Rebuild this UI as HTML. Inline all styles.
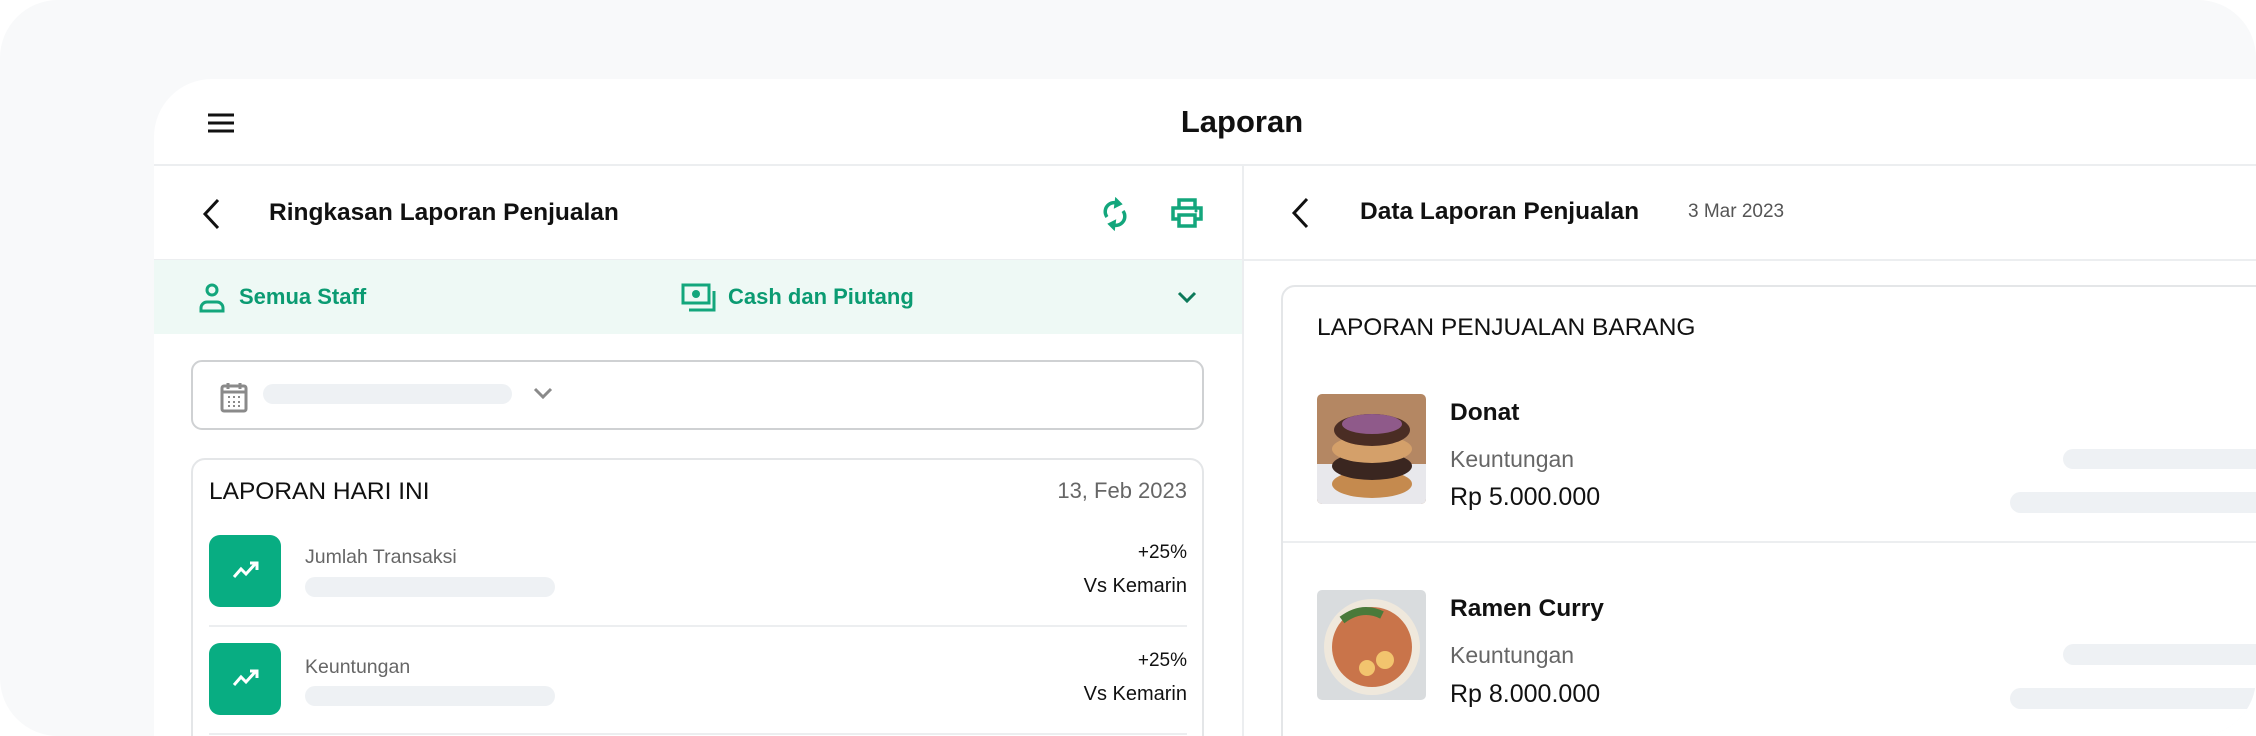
<!DOCTYPE html>
<html><head><meta charset="utf-8"><style>
*{margin:0;padding:0;box-sizing:border-box}
html,body{width:2256px;height:736px;overflow:hidden}
body{background:#fff;font-family:"Liberation Sans",sans-serif}
#o{position:absolute;left:0;top:0;width:2256px;height:736px;background:#f8f9fa;border-radius:58px;overflow:hidden}
#p{position:absolute;left:154px;top:79px;width:2102px;height:657px;background:#fff;border-radius:58px 0 0 0;overflow:hidden}
.a{position:absolute;white-space:nowrap}
.hl{position:absolute;height:2px;background:#eceef0}
.bar{position:absolute;background:#eef1f4;border-radius:12px}
.g{color:#0b9b72}
</style></head><body>
<div id="o">
<div id="p">
 <svg class="a" style="left:52px;top:32px" width="30" height="24" viewBox="0 0 30 24"><path d="M2 4h26M2 12h26M2 20h26" stroke="#111" stroke-width="3"/></svg>
 <div class="a" style="left:1088px;top:22px;width:0"><div style="position:absolute;transform:translateX(-50%);font-size:31px;font-weight:bold;color:#111;top:3px">Laporan</div></div>
 <div class="hl" style="left:0;top:85px;width:2102px"></div>
 <div class="a" style="left:1088px;top:86px;width:2px;height:571px;background:#eceef0"></div>
 <svg class="a" style="left:46px;top:118px" width="24" height="34" viewBox="0 0 24 34"><path d="M18 3L5 17l13 14" stroke="#111" stroke-width="3" fill="none"/></svg>
 <div class="a" style="left:115px;top:120px;font-size:24.5px;font-weight:bold;color:#111">Ringkasan Laporan Penjualan</div>
 <svg class="a" style="left:946px;top:118px" width="30" height="34" viewBox="0 0 30 34"><path d="M7 20a9 9 0 0 1 12-13M23 14a9 9 0 0 1-12 13" stroke="#13a67c" stroke-width="3.5" fill="none"/><path d="M16 2l5 5-6 3z M14 32l-5-5 6-3z" fill="#13a67c" stroke="#13a67c" stroke-width="2"/></svg>
 <svg class="a" style="left:1016px;top:118px" width="34" height="32" viewBox="0 0 34 32"><path d="M9 10V3h16v7M9 22H3V11h28v11h-6M9 18h16v11H9z" stroke="#13a67c" stroke-width="3.5" fill="none"/><circle cx="26" cy="14" r="1.5" fill="#13a67c"/></svg>
 <div class="hl" style="left:0;top:180px;width:1088px"></div>
 <div class="a" style="left:0;top:181px;width:1088px;height:74px;background:#eef9f5"></div>
 <svg class="a" style="left:44px;top:203px" width="28" height="32" viewBox="0 0 28 32"><circle cx="14" cy="8" r="5" stroke="#13a67c" stroke-width="3" fill="none"/><path d="M3 29v-3a6 6 0 0 1 6-6h10a6 6 0 0 1 6 6v3z" stroke="#13a67c" stroke-width="3" fill="none"/></svg>
 <div class="a g" style="left:85px;top:205px;font-size:22px;font-weight:bold">Semua Staff</div>
 <svg class="a" style="left:527px;top:204px" width="36" height="30" viewBox="0 0 36 30"><rect x="2" y="2" width="26" height="18" stroke="#13a67c" stroke-width="3" fill="none"/><circle cx="15" cy="11" r="4" fill="#13a67c"/><path d="M33 8v19H8" stroke="#13a67c" stroke-width="3" fill="none"/></svg>
 <div class="a g" style="left:574px;top:205px;font-size:22px;font-weight:bold">Cash dan Piutang</div>
 <svg class="a" style="left:1022px;top:210px" width="22" height="16" viewBox="0 0 22 16"><path d="M3 4l8 8 8-8" stroke="#0c7a5a" stroke-width="3" fill="none"/></svg>
 <div class="a" style="left:37px;top:281px;width:1013px;height:70px;border:2px solid #cfd1d3;border-radius:11px"></div>
 <svg class="a" style="left:66px;top:302px" width="28" height="32" viewBox="0 0 28 32"><rect x="2" y="5" width="24" height="25" rx="2" stroke="#8a8a8a" stroke-width="3" fill="none"/><path d="M2 11h24M8 2v6M20 2v6" stroke="#8a8a8a" stroke-width="3"/><path d="M8 16h2M13 16h2M18 16h2M8 21h2M13 21h2M18 21h2M8 25h2M13 25h2M18 25h2" stroke="#8a8a8a" stroke-width="2"/></svg>
 <div class="bar" style="left:109px;top:305px;width:249px;height:20px"></div>
 <svg class="a" style="left:378px;top:307px" width="22" height="14" viewBox="0 0 22 14"><path d="M3 3l8 8 8-8" stroke="#8a8a8a" stroke-width="3" fill="none"/></svg>
 <div class="a" style="left:37px;top:379px;width:1013px;height:300px;border:2px solid #e4e6e8;border-radius:14px"></div>
 <div class="a" style="left:55px;top:399px;font-size:24.5px;color:#111">LAPORAN HARI INI</div>
 <div class="a" style="left:1033px;top:399px;font-size:22px;color:#666;transform:translateX(-100%)">13, Feb 2023</div>
 <div class="a" style="left:55px;top:456px;width:72px;height:72px;background:#08ad82;border-radius:11px"></div>
 <svg class="a" style="left:78px;top:480px" width="28" height="22" viewBox="0 0 28 22"><path d="M2 18l7-8 5 5 10-11M18 4h7v7" stroke="#fff" stroke-width="3" fill="none"/></svg>
 <div class="a" style="left:151px;top:467px;font-size:19.5px;color:#666">Jumlah Transaksi</div>
 <div class="bar" style="left:151px;top:498px;width:250px;height:20px"></div>
 <div class="a" style="left:1033px;top:463px;font-size:19px;color:#111;transform:translateX(-100%)">+25%</div>
 <div class="a" style="left:1033px;top:496px;font-size:20px;color:#111;transform:translateX(-100%)">Vs Kemarin</div>
 <div class="hl" style="left:55px;top:546px;width:978px"></div>
 <div class="a" style="left:55px;top:564px;width:72px;height:72px;background:#08ad82;border-radius:11px"></div>
 <svg class="a" style="left:78px;top:588px" width="28" height="22" viewBox="0 0 28 22"><path d="M2 18l7-8 5 5 10-11M18 4h7v7" stroke="#fff" stroke-width="3" fill="none"/></svg>
 <div class="a" style="left:151px;top:577px;font-size:19.5px;color:#666">Keuntungan</div>
 <div class="bar" style="left:151px;top:607px;width:250px;height:20px"></div>
 <div class="a" style="left:1033px;top:571px;font-size:19px;color:#111;transform:translateX(-100%)">+25%</div>
 <div class="a" style="left:1033px;top:604px;font-size:20px;color:#111;transform:translateX(-100%)">Vs Kemarin</div>
 <div class="hl" style="left:55px;top:654px;width:978px"></div>
 <svg class="a" style="left:1135px;top:117px" width="24" height="34" viewBox="0 0 24 34"><path d="M18 3L5 17l13 14" stroke="#111" stroke-width="3" fill="none"/></svg>
 <div class="a" style="left:1206px;top:119px;font-size:24.5px;font-weight:bold;color:#111">Data Laporan Penjualan</div>
 <div class="a" style="left:1534px;top:122px;font-size:19px;color:#555">3 Mar 2023</div>
 <div class="hl" style="left:1090px;top:180px;width:1012px"></div>
 <div class="a" style="left:1127px;top:206px;width:1000px;height:500px;border:2px solid #e4e6e8;border-radius:14px"></div>
 <div class="a" style="left:1163px;top:235px;font-size:24.5px;color:#111">LAPORAN PENJUALAN BARANG</div>
 <svg class="a" style="left:1163px;top:315px" width="109" height="110" viewBox="0 0 109 110"><defs><clipPath id="c1"><rect width="109" height="110" rx="5"/></clipPath></defs><g clip-path="url(#c1)"><rect width="109" height="110" fill="#b48763"/><rect y="70" width="109" height="40" fill="#e8e8ec"/><ellipse cx="55" cy="90" rx="40" ry="14" fill="#c58a4e"/><ellipse cx="55" cy="72" rx="40" ry="14" fill="#3a2620"/><ellipse cx="55" cy="55" rx="40" ry="14" fill="#d4a06a"/><ellipse cx="55" cy="36" rx="38" ry="16" fill="#4a2d24"/><ellipse cx="55" cy="30" rx="30" ry="10" fill="#8f5a8a"/></g></svg>
 <div class="a" style="left:1296px;top:320px;font-size:24.5px;font-weight:bold;color:#111">Donat</div>
 <div class="a" style="left:1296px;top:367px;font-size:23px;color:#666">Keuntungan</div>
 <div class="a" style="left:1296px;top:404px;font-size:25px;color:#111">Rp 5.000.000</div>
 <div class="bar" style="left:1909px;top:370px;width:250px;height:20px"></div>
 <div class="bar" style="left:1856px;top:413px;width:300px;height:21px"></div>
 <div class="hl" style="left:1129px;top:462px;width:973px"></div>
 <svg class="a" style="left:1163px;top:511px" width="109" height="110" viewBox="0 0 109 110"><defs><clipPath id="c2"><rect width="109" height="110" rx="5"/></clipPath></defs><g clip-path="url(#c2)"><rect width="109" height="110" fill="#d9dcde"/><circle cx="55" cy="57" r="48" fill="#efe8dc"/><circle cx="55" cy="57" r="40" fill="#c9744a"/><circle cx="68" cy="70" r="9" fill="#f2c46e"/><circle cx="50" cy="78" r="8" fill="#f2c46e"/><path d="M25 30q20-15 40-5" stroke="#4a7a3a" stroke-width="8" fill="none"/></g></svg>
 <div class="a" style="left:1296px;top:516px;font-size:24.5px;font-weight:bold;color:#111">Ramen Curry</div>
 <div class="a" style="left:1296px;top:563px;font-size:23px;color:#666">Keuntungan</div>
 <div class="a" style="left:1296px;top:601px;font-size:25px;color:#111">Rp 8.000.000</div>
 <div class="bar" style="left:1909px;top:565px;width:250px;height:21px"></div>
 <div class="bar" style="left:1856px;top:609px;width:300px;height:21px"></div>
</div>
</div>
</body></html>
